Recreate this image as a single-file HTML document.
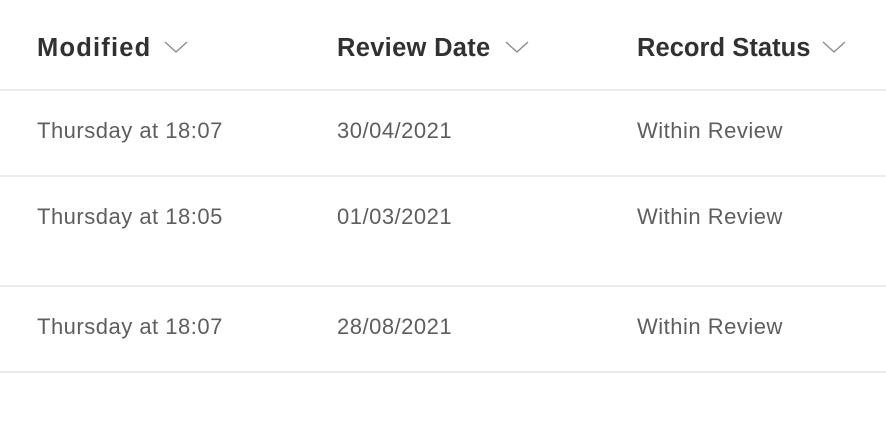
<!DOCTYPE html>
<html><head><style>
body{margin:0;width:886px;height:426px;background:#fff;font-family:"Liberation Sans",sans-serif;position:relative;overflow:hidden}
.t{position:absolute;white-space:nowrap}
.h{font-size:25.5px;font-weight:bold;color:#323130;top:34px;letter-spacing:0.3px}
.b{font-size:22px;color:#605e5c;letter-spacing:0.5px}
.line{position:absolute;left:0;width:886px;height:2px;background:#edebe9}
svg{position:absolute}
</style></head><body>
<div class="t h" style="left:37px;letter-spacing:1.2px">Modified</div>
<svg style="left:164px;top:40px" width="24" height="14"><path d="M1 2 L12 12 L23 2" fill="none" stroke="#8a8886" stroke-width="1.3"/></svg>
<div class="t h" style="left:337px">Review Date</div>
<svg style="left:505px;top:40px" width="24" height="14"><path d="M1 2 L12 12 L23 2" fill="none" stroke="#8a8886" stroke-width="1.3"/></svg>
<div class="t h" style="left:637px;letter-spacing:0.05px">Record Status</div>
<svg style="left:822px;top:40px" width="24" height="14"><path d="M1 2 L12 12 L23 2" fill="none" stroke="#8a8886" stroke-width="1.3"/></svg>
<div class="line" style="top:89px"></div>
<div class="t b" style="left:37px;top:118px">Thursday at 18:07</div>
<div class="t b" style="left:337px;top:118px">30/04/2021</div>
<div class="t b" style="left:637px;top:118px">Within Review</div>
<div class="line" style="top:175px"></div>
<div class="t b" style="left:37px;top:204px">Thursday at 18:05</div>
<div class="t b" style="left:337px;top:204px">01/03/2021</div>
<div class="t b" style="left:637px;top:204px">Within Review</div>
<div class="line" style="top:285px"></div>
<div class="t b" style="left:37px;top:314px">Thursday at 18:07</div>
<div class="t b" style="left:337px;top:314px">28/08/2021</div>
<div class="t b" style="left:637px;top:314px">Within Review</div>
<div class="line" style="top:371px"></div>
</body></html>
